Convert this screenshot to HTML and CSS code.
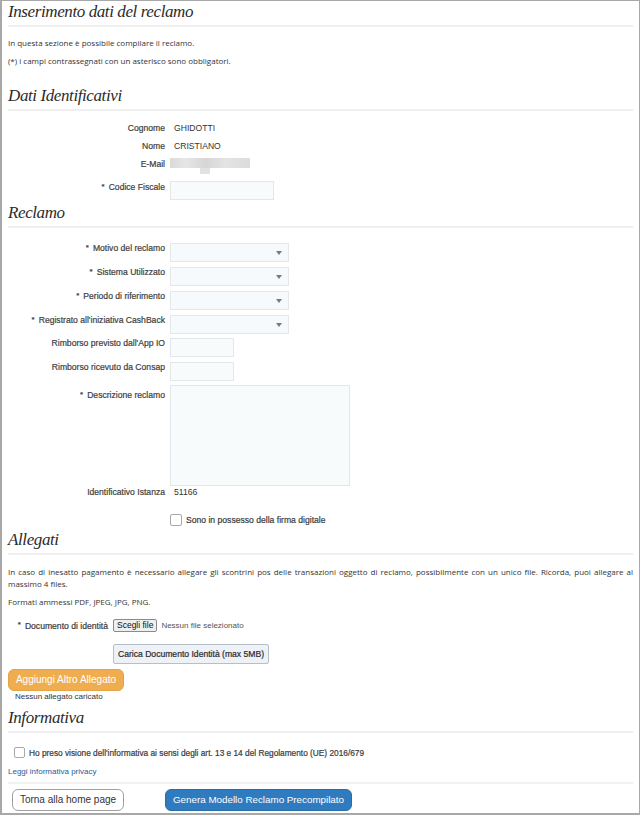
FILE: index.html
```html
<!DOCTYPE html>
<html lang="it">
<head>
<meta charset="utf-8">
<title>Inserimento dati del reclamo</title>
<link rel="stylesheet" href="styles.css">
</head>
<body>
<div class="frame">
  <h1 class="sec-title first">Inserimento dati del reclamo</h1>
  <p class="note n1">In questa sezione è possibile compilare il reclamo.</p>
  <p class="note n2">(*) i campi contrassegnati con un asterisco sono obbligatori.</p>

  <h2 class="sec-title t-dati">Dati Identificativi</h2>
  <div class="form f-dati">
    <div class="row r-info"><div class="lbl">Cognome</div><div class="val">GHIDOTTI</div></div>
    <div class="row r-info"><div class="lbl">Nome</div><div class="val">CRISTIANO</div></div>
    <div class="row r-info"><div class="lbl">E-Mail</div><div class="val"><span class="blur"></span><span class="blur2"></span></div></div>
    <div class="row r-cf"><div class="lbl"><span class="ast">*</span>Codice Fiscale</div><div class="fld"><span class="input w104"></span></div></div>
  </div>

  <h2 class="sec-title t-rec">Reclamo</h2>
  <div class="form f-rec">
    <div class="row r-sel"><div class="lbl"><span class="ast">*</span>Motivo del reclamo</div><div class="fld"><span class="select"><span class="caret"></span></span></div></div>
    <div class="row r-sel"><div class="lbl"><span class="ast">*</span>Sistema Utilizzato</div><div class="fld"><span class="select"><span class="caret"></span></span></div></div>
    <div class="row r-sel"><div class="lbl"><span class="ast">*</span>Periodo di riferimento</div><div class="fld"><span class="select"><span class="caret"></span></span></div></div>
    <div class="row r-sel r-last"><div class="lbl"><span class="ast">*</span>Registrato all'iniziativa CashBack</div><div class="fld"><span class="select"><span class="caret"></span></span></div></div>
    <div class="row r-sel"><div class="lbl">Rimborso previsto dall'App IO</div><div class="fld"><span class="input w64"></span></div></div>
    <div class="row r-sel"><div class="lbl">Rimborso ricevuto da Consap</div><div class="fld"><span class="input w64"></span></div></div>
    <div class="row r-ta"><div class="lbl lbl-ta"><span class="ast">*</span>Descrizione reclamo</div><div class="fld"><span class="textarea"></span></div></div>
    <div class="row r-id"><div class="lbl">Identificativo Istanza</div><div class="val">51166</div></div>
    <div class="row r-chk"><div class="lbl"></div><div class="check-row"><span class="box"></span><span class="check-lbl">Sono in possesso della firma digitale</span></div></div>
  </div>

  <h2 class="sec-title t-all">Allegati</h2>
  <p class="note long">In caso di inesatto pagamento è necessario allegare gli scontrini pos delle transazioni oggetto di reclamo, possibilmente con un unico file. Ricorda, puoi allegare al massimo 4 files.</p>
  <p class="note n3">Formati ammessi PDF, JPEG, JPG, PNG.</p>
  <div class="doc-row">
    <span class="doc-lbl"><span class="ast">*</span>Documento di identità</span>
    <span class="file-btn">Scegli file</span>
    <span class="file-txt">Nessun file selezionato</span>
  </div>
  <div class="upload-row"><span class="upload-btn">Carica Documento Identità (max 5MB)</span></div>
  <div class="add-row"><span class="btn-orange">Aggiungi Altro Allegato</span></div>
  <p class="none">Nessun allegato caricato</p>

  <h2 class="sec-title t-inf">Informativa</h2>
  <div class="privacy-row"><span class="box box-sm"></span><span class="check-lbl privacy-lbl">Ho preso visione dell'informativa ai sensi degli art. 13 e 14 del Regolamento (UE) 2016/679</span></div>
  <div class="link-row"><a class="link" href="#">Leggi informativa privacy</a></div>
  <div class="actions">
    <span class="btn-white">Torna alla home page</span>
    <span class="btn-blue">Genera Modello Reclamo Precompilato</span>
  </div>
</div>
</body>
</html>
```
FILE: styles.css
```css
* { box-sizing: border-box; }
html, body { margin: 0; padding: 0; background: #fff; }
body { width: 640px; height: 815px; overflow: hidden; }
.frame {
  width: 640px; height: 815px;
  border: 1px solid #a8a8a8;
  border-left-width: 2px;
  border-bottom-width: 2px;
  padding: 0 6px 0 6px;
  font-family: "Open Sans", sans-serif;
  color: #333;
}
.sec-title {
  font-family: "Liberation Serif", serif;
  font-style: italic;
  font-weight: normal;
  font-size: 17px;
  letter-spacing: -0.4px;
  line-height: 20px;
  color: #2b2b2b;
  margin: 0;
  padding: 0 0 3px 0;
  border-bottom: 2px solid #efefef;
}
.sec-title.first { margin-top: 1px; }
.t-dati { margin-top: 19px; }
.t-rec { margin-top: 3px; }
.t-all { margin-top: 4px; }
.t-inf { margin-top: 6px; }

.note { font-size: 8px; line-height: 12px; margin: 0; color: #333; }
.n1 { margin-top: 10px; }
.n2 { margin-top: 6px; }
.long { margin-top: 11px; text-align: justify; }
.n3 { margin-top: 6px; }

.form { font-family: "Liberation Sans", Arial, sans-serif; font-size: 8.6px; }
.f-dati { margin-top: 8px; }
.f-rec { margin-top: 15px; }
.row { display: flex; align-items: flex-start; }
.lbl {
  width: 157px; flex: none; text-align: right;
  line-height: 11px; color: #404040;
  -webkit-text-stroke: 0.2px #404040;
  margin-right: 5px;
}
.val { line-height: 11px; padding-left: 4px; color: #333; }
.r-info { height: 18px; }
.r-info .lbl, .r-info .val { padding-top: 4px; }
.r-cf { margin-top: 8px; height: 19px; }
.r-cf .lbl { padding-top: 1px; }
.r-sel { height: 19px; margin-bottom: 5px; }
.r-last { margin-bottom: 4px; }
.r-ta { height: 101px; margin-top: -1px; }
.lbl-ta { padding-top: 5px; }
.r-id { margin-top: 1px; height: 11px; }
.r-chk { margin-top: 16px; height: 12px; }

.blur { display: block; width: 80px; height: 10px; margin-left: -4px; margin-top: -1px;
  background: linear-gradient(90deg,#dadada 0%,#e6e6e6 20%,#d6d6d6 45%,#e4e4e4 70%,#dcdcdc 100%); }
.blur2 { display: block; width: 10px; height: 6px; margin-left: 26px; background: #e2e2e2; }
.ast { color: #333; font-size: 8px; vertical-align: top; position: relative; top: -1px; margin-right: 4px; }

.input { display: block; height: 19px; border: 1px solid #e3e7ea; background: #f8fbfc; }
.w104 { width: 104px; }
.w64 { width: 64px; }
.select { display: block; position: relative; width: 119px; height: 19px; border: 1px solid #e3e7ea; background: #f6fafc; }
.caret { position: absolute; right: 6px; top: 7px; width: 0; height: 0;
  border-left: 3px solid transparent; border-right: 3px solid transparent; border-top: 4px solid #7a7a7a; }
.textarea { display: block; width: 180px; height: 101px; border: 1px solid #e3e7ea; background: #f8fbfc; }

.check-row { display: flex; align-items: center; gap: 4px; height: 12px; }
.box { display: inline-block; flex: none; width: 12px; height: 12px; border: 1px solid #a9a9a9; border-radius: 2px; background: #fff; }
.box-sm { width: 11px; height: 11px; }
.check-lbl { font-family: "Liberation Sans", Arial, sans-serif; font-size: 8.6px; color: #3a3a3a; -webkit-text-stroke: 0.2px #3a3a3a; white-space: nowrap; }
.privacy-lbl { font-size: 8.3px; }

.doc-row { display: flex; align-items: center; height: 13px; margin-top: 11px; font-family: "Liberation Sans", Arial, sans-serif; font-size: 8.6px; }
.doc-lbl { width: 100px; text-align: right; color: #3a3a3a; -webkit-text-stroke: 0.2px #3a3a3a; margin-right: 5px; }
.file-btn { display: inline-block; height: 13px; line-height: 11px; border: 1px solid #8a8a8a; background: #efefef; padding: 0 3px; border-radius: 2px; color: #111; font-size: 8.5px; }
.file-txt { margin-left: 4px; color: #555; font-size: 8px; }
.upload-row { padding-left: 105px; margin-top: 8px; height: 20px; }
.upload-btn { display: inline-block; width: 156px; text-align: center; font-family: "Liberation Sans", Arial, sans-serif; font-size: 8.6px; color: #2a2a2a; -webkit-text-stroke: 0.2px #2a2a2a; background: #eef2f6; border: 1px solid #b4bfca; height: 20px; line-height: 18px; border-radius: 2px; }
.add-row { margin-top: 6px; height: 22px; }
.btn-orange { display: inline-block; width: 116px; text-align: center; font-family: "Liberation Sans", Arial, sans-serif; font-size: 10px; color: #fff; background: #efad50; border: 1px solid #e2a446; height: 22px; line-height: 20px; border-radius: 6px; }
.none { font-family: "Liberation Sans", Arial, sans-serif; font-size: 8px; line-height: 11px; color: #333; margin: 3px 0 0 7px; }

.privacy-row { display: flex; align-items: center; gap: 4px; padding-left: 6px; margin-top: 14px; height: 11px; }
.link-row { margin-top: 5px; padding-bottom: 5px; border-bottom: 2px solid #f2f2f2; line-height: 10px; }
.link { font-family: "Liberation Sans", Arial, sans-serif; font-size: 8px; color: #1d5d9c; text-decoration: none; }
.actions { display: flex; gap: 41px; padding-left: 4px; margin-top: 5px; }
.btn-white { display: inline-block; font-family: "Liberation Sans", Arial, sans-serif; font-size: 10px; color: #333; background: #fff; border: 1px solid #a0a0a0; height: 22px; line-height: 20px; width: 112px; text-align: center; border-radius: 6px; }
.btn-blue { display: inline-block; font-family: "Liberation Sans", Arial, sans-serif; font-size: 9.8px; color: #fff; background: #2f7bbf; border: 1px solid #2a6ea9; height: 22px; line-height: 20px; width: 187px; text-align: center; border-radius: 6px; }
```
